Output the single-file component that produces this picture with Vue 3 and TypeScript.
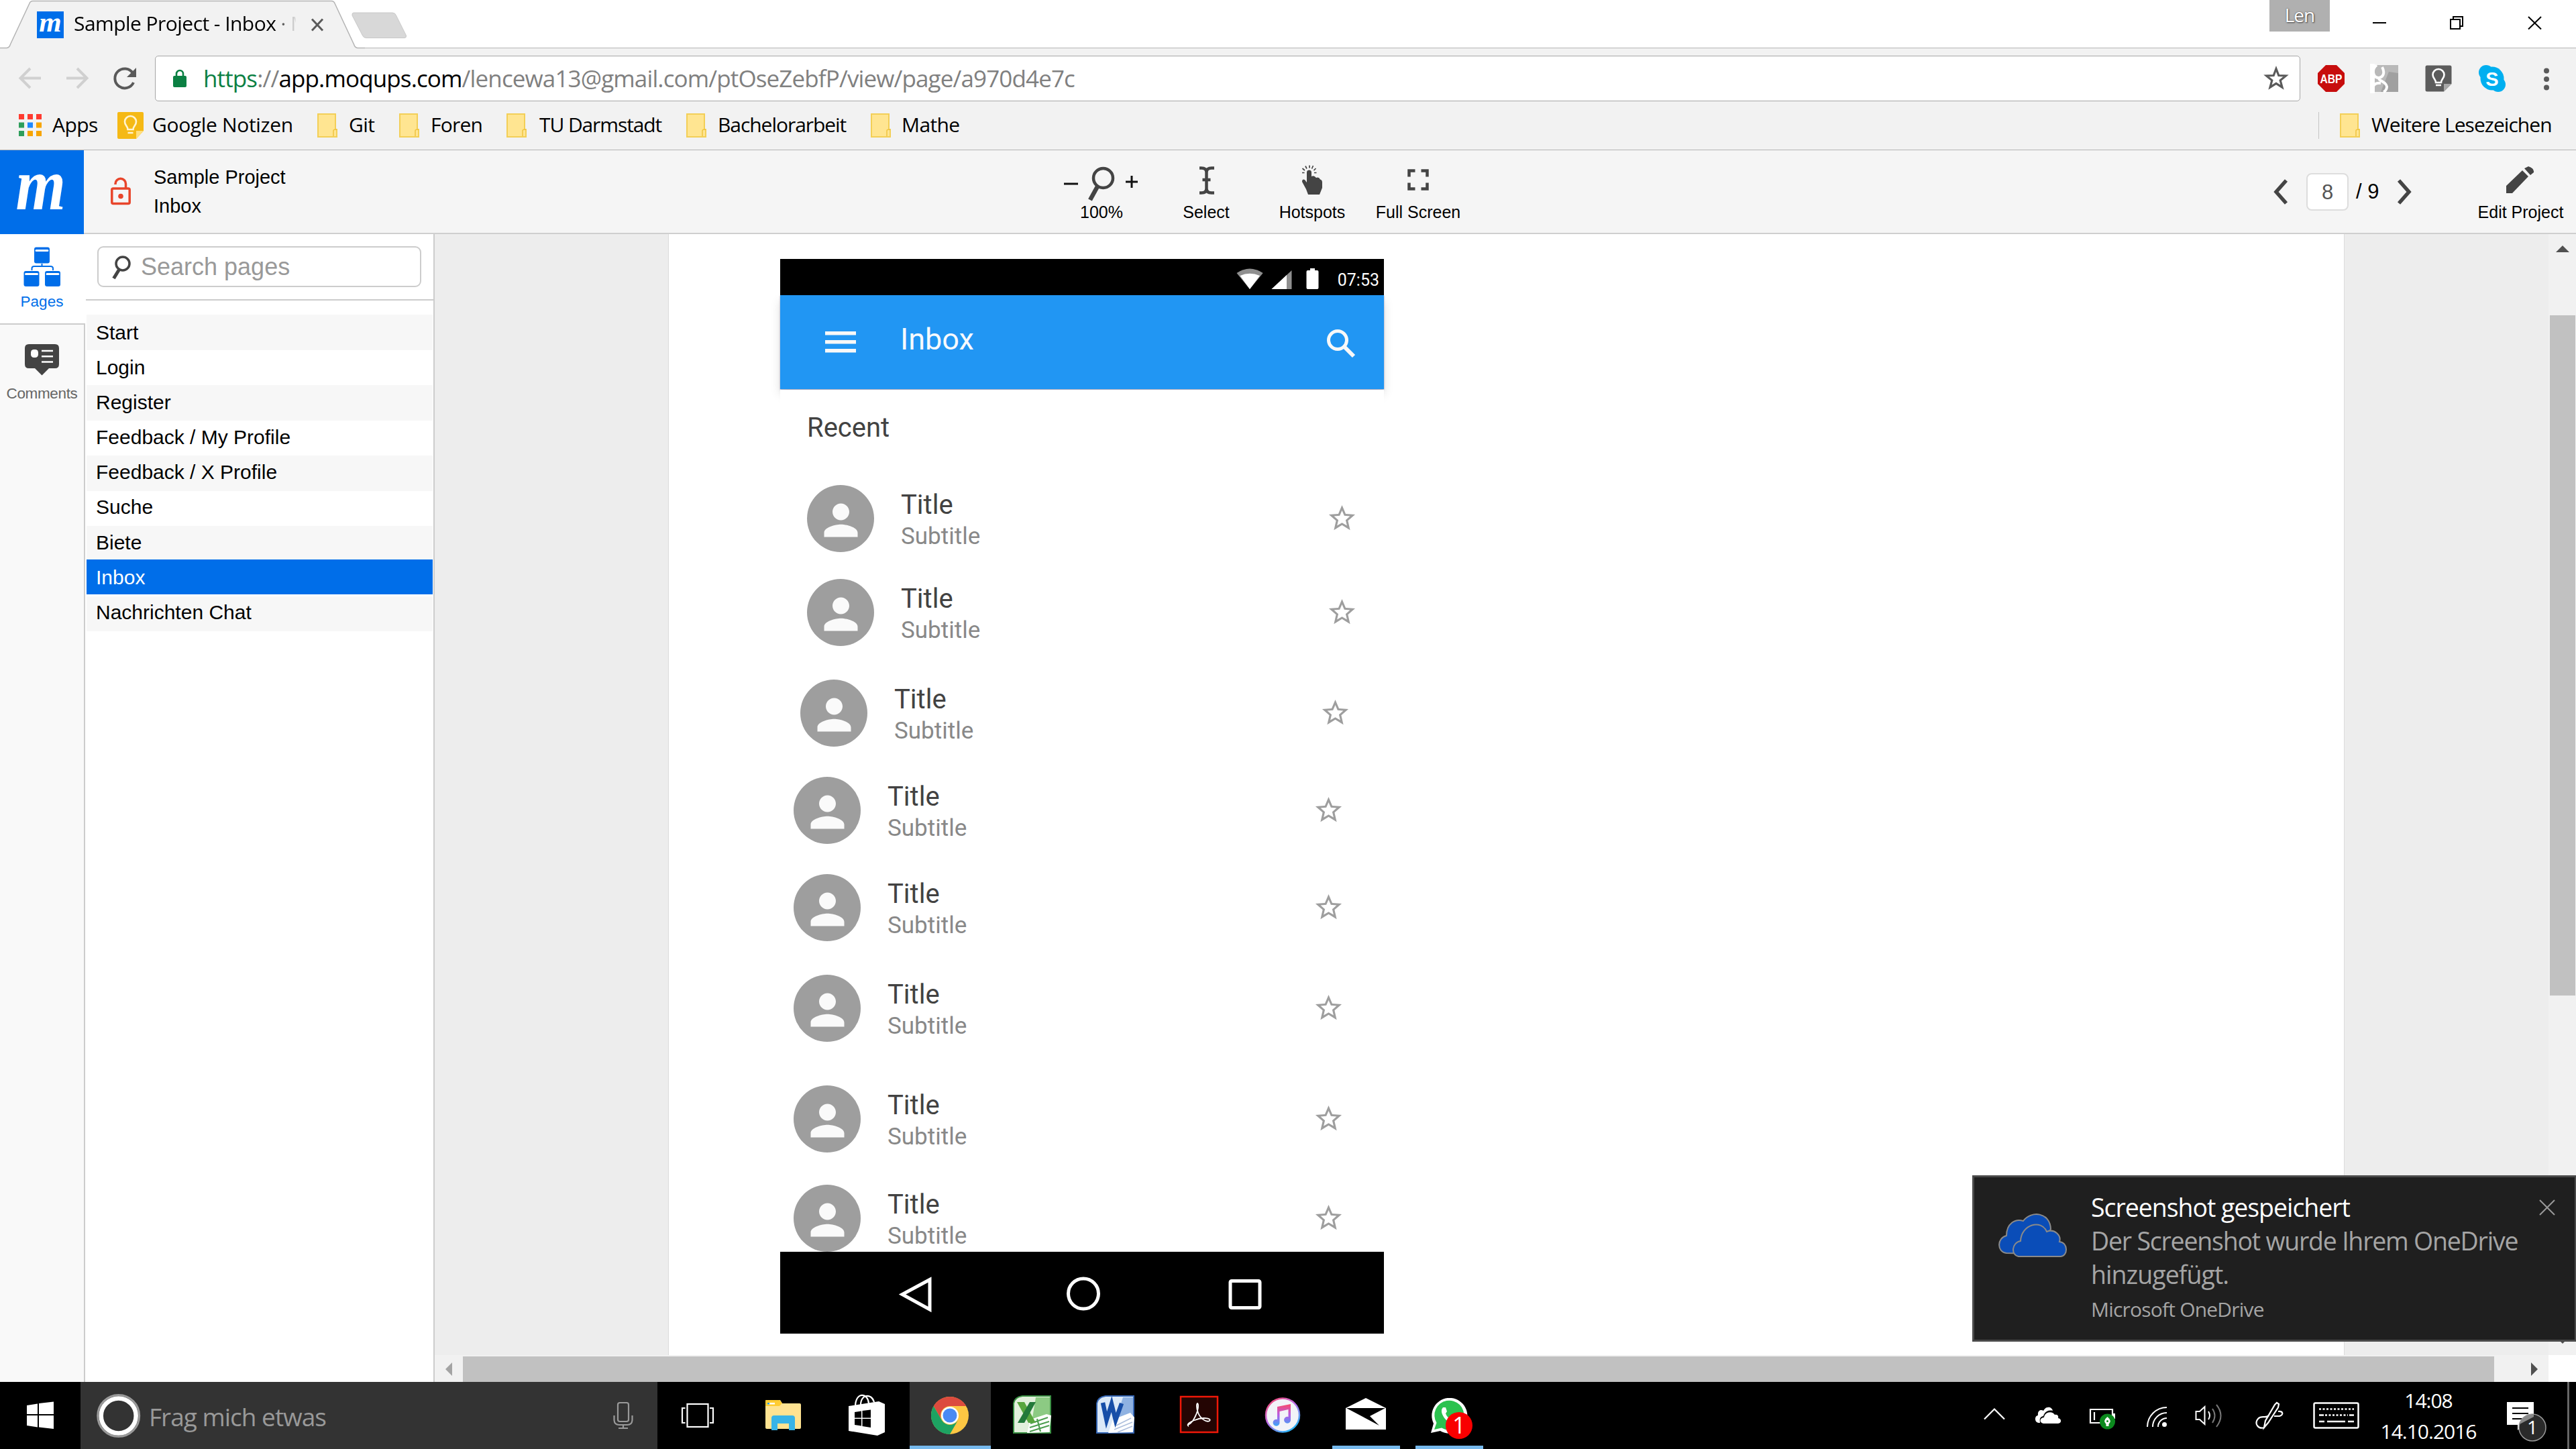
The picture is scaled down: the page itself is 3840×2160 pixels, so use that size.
<script setup lang="ts">
interface Bookmark { label: string; kind: 'apps' | 'keep' | 'folder'; cls: string }
interface Contact { gap: number; indent: number }

const bookmarks: Bookmark[] = [
  { label: 'Apps', kind: 'apps', cls: 'bm-apps' },
  { label: 'Google Notizen', kind: 'keep', cls: 'bm-keep' },
  { label: 'Git', kind: 'folder', cls: 'bm-git' },
  { label: 'Foren', kind: 'folder', cls: 'bm-foren' },
  { label: 'TU Darmstadt', kind: 'folder', cls: 'bm-tu' },
  { label: 'Bachelorarbeit', kind: 'folder', cls: 'bm-ba' },
  { label: 'Mathe', kind: 'folder', cls: 'bm-mathe' },
]

const appDots = ['#ff3b30', '#ff3b30', '#ff3b30', '#2e9e5b', '#1e88ff', '#f7a500', '#2e9e5b', '#f7a500', '#f7a500']

const pages: string[] = [
  'Start', 'Login', 'Register', 'Feedback / My Profile', 'Feedback / X Profile',
  'Suche', 'Biete', 'Inbox', 'Nachrichten Chat',
]
const activePage = 'Inbox'

const contacts: Contact[] = [
  { gap: 60.5, indent: 40 },
  { gap: 40, indent: 40 },
  { gap: 50, indent: 30 },
  { gap: 45, indent: 20 },
  { gap: 45, indent: 20 },
  { gap: 50, indent: 20 },
  { gap: 65, indent: 20 },
  { gap: 47.5, indent: 20 },
]
</script>

<template>
  <div class="screen">
    <!-- Tab strip -->
    <div class="tabstrip">
      <div class="tab">
        <svg class="tab-shape" width="544" height="72" viewBox="0 0 544 72">
          <path d="M0 72V71.5H10Q14 71 15.500 66L43.500 6Q45 1.500 49 1.500H494Q498 1.500 499.500 6L527.500 66Q529 71 533 71.500H544V72Z" fill="#f2f2f2" />
          <path d="M0 71.500H10Q14 71 15.500 66L43.500 6Q45 1.500 49 1.500H494Q498 1.500 499.500 6L527.500 66Q529 71 533 71.500H544" fill="none" stroke="#b4b4b4" stroke-width="1.500" />
        </svg>
        <span class="favicon"><span class="favicon-m">m</span></span>
        <span class="tab-title">Sample Project - Inbox · M</span>
        <svg class="tab-close" width="20" height="20" viewBox="0 0 20 20"><path d="M2 1.500L18 18.500M18 1.500L2 18.500" stroke="#5a5a5a" stroke-width="3" /></svg>
      </div>
      <svg class="newtab" width="84" height="40" viewBox="0 0 84 40"><path d="M3 1H61Q65 1 66.500 5L81.500 35Q82 38.500 79 38.500H22Q18 38.500 16.500 35L1 5Q0.500 1 3 1Z" fill="#d8d8d8" stroke="#c8c8c8" /></svg>
      <div class="spacer"></div>
      <div class="user">Len</div>
      <svg class="winctl" width="367" height="71" viewBox="0 0 367 71" fill="none" stroke="#000" stroke-width="2">
        <path d="M64 34H84" />
        <path d="M180 29H194V43H180ZM184 29V25H198V39H194" />
        <path d="M296 25L315 43.500M315 25L296 43.500" />
      </svg>
    </div>

    <!-- Toolbar -->
    <div class="toolbar">
      <svg width="231" height="90" viewBox="0 72 231 90" fill="none">
        <path d="M61 116.500H31M45 102L30.500 116.500L45 131" stroke="#d0d0d0" stroke-width="4" />
        <path d="M99 116.500H129M115 102L129.500 116.500L115 131" stroke="#d0d0d0" stroke-width="4" />
        <path d="M198 109A14.500 14.500 0 1 0 199 123" stroke="#5a5a5a" stroke-width="4" />
        <path d="M203 101V115H189Z" fill="#5a5a5a" />
      </svg>
      <div class="omnibox">
        <svg class="lock" width="20" height="28" viewBox="0 0 20 28">
          <path d="M5 11V7a5 5 0 0 1 10 0V11" fill="none" stroke="#0b8043" stroke-width="2.600" />
          <rect x="0" y="10" width="20" height="17" rx="2" fill="#0b8043" />
        </svg>
        <span class="url"><span class="url-scheme">https</span>://<span class="url-host">app.moqups.com</span>/lencewa13@gmail.com/ptOseZebfP/view/page/a970d4e7c</span>
        <svg class="bookmark-star" width="38" height="38" viewBox="0 0 38 38"><path d="M19 4.500L22.800 14.500L33.500 15L25.200 21.800L28 32.200L19 26.300L10 32.200L12.800 21.800L4.500 15L15.200 14.500Z" fill="none" stroke="#5a5a5a" stroke-width="3.200" /></svg>
      </div>
      <div class="extensions">
        <svg width="40" height="40" viewBox="0 0 40 40">
          <path d="M12 0H28L40 12V28L28 40H12L0 28V12Z" fill="#c70d0d" />
          <text x="3.500" y="27" font-size="18" font-weight="700" textLength="33" lengthAdjust="spacingAndGlyphs" fill="#fff" class="arial">ABP</text>
        </svg>
        <svg width="40" height="40" viewBox="0 0 40 40">
          <rect width="40" height="40" fill="#b9b9b9" /><path d="M40 12L26 10L14 40H40Z" fill="#a0a0a0" />
          <path d="M3 0V40H0V0ZM8 0C0 6 2 18 10 19C17 19 21 12 16 3M12 19C8 23 22 24 23 32C23 38 18 40 18 40M3 40C0 30 6 26 14 27" fill="none" stroke="#fff" stroke-width="4" />
        </svg>
        <svg width="40" height="40" viewBox="0 0 40 40">
          <path d="M3 0.500H37Q39.500 0.500 39.500 3V28L28 39.500H3Q0.500 39.500 0.500 37V3Q0.500 0.500 3 0.500Z" fill="#5c5c5c" /><path d="M39.500 28H28V39.500Z" fill="#a8a8a8" />
          <path d="M16 26C16 21 11.500 20 11.500 14.500A8.500 8.500 0 0 1 28.500 14.500C28.500 20 24 21 24 26ZM16 30H24" fill="none" stroke="#fff" stroke-width="2.600" />
        </svg>
        <svg width="40" height="40" viewBox="0 0 40 40">
          <circle cx="20" cy="20" r="17.500" fill="#00aff0" /><circle cx="11" cy="11" r="11" fill="#00aff0" /><circle cx="29" cy="29" r="11" fill="#00aff0" />
          <text x="20" y="30.500" font-size="29" font-weight="700" text-anchor="middle" fill="#fff" class="arial">S</text>
        </svg>
        <svg class="kebab" width="12" height="40" viewBox="0 0 12 40" fill="#5a5a5a"><circle cx="6" cy="8.500" r="4" /><circle cx="6" cy="21" r="4" /><circle cx="6" cy="33.500" r="4" /></svg>
      </div>
    </div>

    <!-- Bookmarks bar -->
    <div class="bookmarks">
      <div v-for="b in bookmarks" :key="b.label" class="bookmark" :class="b.cls">
        <svg v-if="b.kind === 'apps'" width="34" height="40" viewBox="0 0 34 40">
          <rect v-for="(c, i) in appDots" :key="i" :x="(i % 3) * 13" :y="3 + Math.floor(i / 3) * 12.500" width="8" height="8" :fill="c" />
        </svg>
        <svg v-else-if="b.kind === 'keep'" width="39" height="40" viewBox="0 0 39 40">
          <path d="M2 0H37Q39 0 39 2V28L28 40H2Q0 40 0 38V2Q0 0 2 0Z" fill="#f5b915" /><path d="M39 28H28V40Z" fill="#ffdf80" />
          <path d="M15.500 26C15.500 21 11 20 11 14.500A8.500 8.500 0 0 1 28 14.500C28 20 23.500 21 23.500 26ZM15.500 31H23.500" fill="none" stroke="#fff4d0" stroke-width="2.600" />
        </svg>
        <svg v-else width="30" height="36" viewBox="0 0 30 36">
          <path d="M1 1H27V24H29V35H1Z" fill="#ffe591" stroke="#f3cf57" stroke-width="2" /><path d="M24 34V26Q24 24 27 24H29" fill="none" stroke="#f0c440" stroke-width="1.500" />
        </svg>
        <span>{{ b.label }}</span>
      </div>
      <div class="spacer"></div>
      <div class="bookmark bm-more">
        <svg width="30" height="36" viewBox="0 0 30 36">
          <path d="M1 1H27V24H29V35H1Z" fill="#ffe591" stroke="#f3cf57" stroke-width="2" /><path d="M24 34V26Q24 24 27 24H29" fill="none" stroke="#f0c440" stroke-width="1.500" />
        </svg>
        <span>Weitere Lesezeichen</span>
      </div>
    </div>

    <!-- Moqups header -->
    <header class="app-header">
      <div class="logo"><span class="logo-m">m</span></div>
      <svg class="unlock" width="30" height="40" viewBox="0 0 30 40" fill="none" stroke="#e8452b" stroke-width="3.500">
        <rect x="1.800" y="15" width="26.400" height="22.500" rx="2" /><path d="M7 9V8a7.500 7.500 0 0 1 15.500 0V15" /><circle cx="15" cy="26.500" r="3.800" fill="#e8452b" stroke="none" />
      </svg>
      <div class="project"><div>Sample Project</div><div>Inbox</div></div>
      <div class="tools">
        <div class="tool tool-zoom">
          <svg width="160" height="77" viewBox="1562 224 160 77">
            <path d="M1586 274H1607M1678 271H1696M1687 262V280" stroke="#111" stroke-width="3" />
            <circle cx="1644.500" cy="265.500" r="14.500" fill="none" stroke="#444" stroke-width="4.500" />
            <path d="M1636 278L1625 298" stroke="#444" stroke-width="6.500" />
          </svg>
          <span>100%</span>
        </div>
        <div class="tool tool-select">
          <svg width="152" height="77" viewBox="1722 224 152 77" fill="none" stroke="#444" stroke-width="4.500">
            <path d="M1788 250.500H1791Q1798.500 250.500 1798.500 257V281Q1798.500 287.500 1791 287.500H1788M1810 250.500H1806Q1798.500 250.500 1798.500 257M1810 287.500H1806Q1798.500 287.500 1798.500 281M1792.500 268H1804.500" />
          </svg>
          <span>Select</span>
        </div>
        <div class="tool tool-hot">
          <svg width="164" height="77" viewBox="1874 224 164 77">
            <path d="M1948 257a3.500 3.500 0 0 1 7 0V263Q1959 261 1962 265Q1966 263 1968 267.500Q1971 268 1971 272V280L1967 290H1950L1947 282L1941 271Q1941 266 1945 268L1948 272Z" fill="#444" />
            <path d="M1941 257.500H1944.500M1941.500 251L1945 254M1946 247.500L1948 251.500M1952 246.500V250.500M1957.500 247L1955.500 251.500M1961.500 251L1958.500 254M1962.500 257.500H1959" stroke="#444" stroke-width="1.700" />
          </svg>
          <span>Hotspots</span>
        </div>
        <div class="tool tool-full">
          <svg width="152" height="77" viewBox="2038 224 152 77" fill="none" stroke="#444" stroke-width="4.500">
            <path d="M2100.500 263.500V254.500H2109.500M2118.500 254.500H2127.500V263.500M2127.500 272.500V281.500H2118.500M2109.500 281.500H2100.500V272.500" />
          </svg>
          <span>Full Screen</span>
        </div>
      </div>
      <div class="spacer"></div>
      <div class="pager">
        <svg width="24" height="38" viewBox="0 0 24 38"><path d="M20 2L5 19L20 36" fill="none" stroke="#444" stroke-width="5.500" /></svg>
        <div class="page-no">8</div>
        <span class="page-total">/ 9</span>
        <svg width="24" height="38" viewBox="0 0 24 38"><path d="M4 2L19 19L4 36" fill="none" stroke="#444" stroke-width="5.500" /></svg>
      </div>
      <div class="tool tool-edit">
        <svg width="165" height="77" viewBox="3675 224 165 77" fill="#444">
          <path d="M3736 288V277L3760 254L3769 263L3745 288ZM3763 251L3769 248Q3778 251 3777 257L3772 261Z" />
        </svg>
        <span>Edit Project</span>
      </div>
    </header>

    <div class="workspace">
      <!-- Rail -->
      <nav class="rail">
        <div class="rail-pages">
          <svg width="125" height="87" viewBox="0 0 125 87">
            <g fill="#006ee9"><rect x="51" y="19.500" width="23" height="24" rx="3" /><rect x="35.500" y="55" width="23" height="23" rx="3" /><rect x="67" y="55" width="23" height="23" rx="3" /></g>
            <path d="M54 24.500H71M38.500 59.500H55.500M70 59.500H87" stroke="#fff" stroke-width="3" stroke-linecap="round" />
            <path d="M62.500 44V48M47.500 54V51Q47.500 48 51 48H75Q79 48 79 51V54" fill="none" stroke="#006ee9" stroke-width="2" />
          </svg>
          <span>Pages</span>
        </div>
        <div class="rail-rest">
          <svg width="125" height="89" viewBox="0 0 125 89">
            <path d="M43 29H82Q88 29 88 35V59Q88 65 82 65H73L62.500 75.500L52 65H43Q37 65 37 59V35Q37 29 43 29Z" fill="#444" />
            <rect x="46" y="37" width="11" height="12" rx="4.500" fill="#fff" /><path d="M62 39H79M62 47.300H79M62 55.500H79" stroke="#fff" stroke-width="2.500" />
          </svg>
          <span>Comments</span>
        </div>
      </nav>

      <!-- Pages panel -->
      <aside class="panel">
        <div class="search">
          <svg width="28" height="38" viewBox="0 0 28 38"><circle cx="16" cy="13" r="10" fill="none" stroke="#444" stroke-width="3.500" /><path d="M10.500 22L2.500 35" stroke="#444" stroke-width="5" /></svg>
          <span>Search pages</span>
        </div>
        <div class="divider"></div>
        <ul class="pages">
          <li v-for="p in pages" :key="p" :class="{ active: p === activePage }">{{ p }}</li>
        </ul>
      </aside>

      <!-- Canvas -->
      <main class="canvas">
        <div class="canvas-row">
          <div class="viewport">
            <div class="paper">
              <div class="phone">
                <div class="statusbar">
                  <svg width="140" height="54" viewBox="1840 386 140 54">
                    <path d="M1843.500 407Q1863 394 1882.700 407L1863 431Z" fill="#8f8f8f" /><path d="M1848.500 411Q1863 404.500 1878 411L1863 431Z" fill="#fff" />
                    <path d="M1925.500 403V431H1895.500Z" fill="#8f8f8f" /><path d="M1918 410V431H1895.500Z" fill="#fff" />
                    <path d="M1953 400H1960V403H1963.500Q1965.500 403 1965.500 405V429Q1965.500 431 1963.500 431H1949.500Q1947.500 431 1947.500 429V405Q1947.500 403 1949.500 403H1953Z" fill="#fff" />
                  </svg>
                  <span>07:53</span>
                </div>
                <div class="appbar">
                  <svg class="burger" width="46" height="32" viewBox="0 0 46 32" fill="#f8f8f8"><rect y="0" width="46" height="5.500" /><rect y="13" width="46" height="5.500" /><rect y="26" width="46" height="5.500" /></svg>
                  <span class="appbar-title">Inbox</span>
                  <div class="spacer"></div>
                  <svg class="find" width="44" height="44" viewBox="0 0 44 44" fill="none" stroke="#f8f8f8"><circle cx="17" cy="17" r="13.500" stroke-width="5" /><path d="M27 27L41 41" stroke-width="6" /></svg>
                </div>
                <div class="inbox">
                  <div class="recent">Recent</div>
                  <div v-for="(c, i) in contacts" :key="i" class="contact" :style="{ marginTop: c.gap + 'px', marginLeft: c.indent + 'px' }">
                    <div class="avatar">
                      <svg width="75" height="75" viewBox="0 0 24 24" fill="#fafafa"><path d="M12 12c2.210 0 4-1.790 4-4s-1.790-4-4-4-4 1.790-4 4 1.790 4 4 4zm0 2c-2.670 0-8 1.340-8 4v2h16v-2c0-2.660-5.330-4-8-4z" /></svg>
                    </div>
                    <div class="lines"><div class="title">Title</div><div class="subtitle">Subtitle</div></div>
                    <svg class="star" width="47" height="47" viewBox="0 0 24 24" fill="#9e9e9e"><path d="M22 9.240l-7.190-.620L12 2 9.190 8.630 2 9.240l5.460 4.730L5.820 21 12 17.270 18.180 21l-1.630-7.030L22 9.240zM12 15.400l-3.760 2.270 1-4.280-3.320-2.880 4.380-.380L12 6.100l1.710 4.040 4.380.380-3.320 2.880 1 4.280L12 15.400z" /></svg>
                  </div>
                </div>
                <div class="navbar">
                  <svg width="900" height="122" viewBox="1163 1867 900 122" fill="none" stroke="#fff" stroke-width="5">
                    <path d="M1386 1908.500V1953L1345 1930.500Z" /><circle cx="1615" cy="1929.500" r="22.500" /><rect x="1834" y="1910.500" width="44" height="40" rx="2" />
                  </svg>
                </div>
              </div>
            </div>
          </div>
          <div class="vbar">
            <svg width="41" height="28" viewBox="0 0 41 28"><path d="M11 27L21 17L31 27Z" fill="#505050" /></svg>
            <div class="vthumb"></div>
            <div class="spacer"></div>
            <svg width="41" height="28" viewBox="0 0 41 28"><path d="M11 1L21 11L31 1Z" fill="#505050" /></svg>
          </div>
        </div>
        <div class="hbar">
          <svg width="42" height="40" viewBox="648 2020 42 40"><path d="M674 2031V2051L664 2041Z" fill="#a3a3a3" /></svg>
          <div class="hthumb"></div>
          <svg width="81" height="40" viewBox="3718 2020 81 40"><path d="M3773 2031V2051L3783 2041Z" fill="#505050" /></svg>
          <div class="corner"></div>
        </div>
      </main>
    </div>

    <!-- Taskbar -->
    <footer class="taskbar">
      <svg width="120" height="100" viewBox="0 0 120 100" fill="#fff"><path d="M40 35L56 32.500V48H40ZM58 32L80 29.500V48H58ZM40 50H56V67.500L40 65ZM58 50H80V70L58 67.500Z" /></svg>
      <div class="cortana">
        <svg width="102" height="100" viewBox="120 2060 102 100" fill="none"><circle cx="176.700" cy="2110.500" r="31" stroke="#999" stroke-width="3" /><circle cx="176.700" cy="2110.500" r="26" stroke="#fff" stroke-width="6.500" /></svg>
        <span>Frag mich etwas</span>
        <div class="spacer"></div>
        <svg width="80" height="100" viewBox="900 2060 80 100" fill="none" stroke="#999" stroke-width="2.200"><rect x="921" y="2091" width="16" height="28" rx="3" /><path d="M915.500 2110V2117Q916 2124 923 2124H935Q942 2124 942.500 2117V2110M929 2124V2129M922 2129H936" /></svg>
      </div>
      <svg width="126" height="100" viewBox="980 2060 126 100" fill="none" stroke="#fff" stroke-width="2.200"><rect x="1024.500" y="2093" width="31" height="34" /><path d="M1021.500 2099H1017V2121H1021.500M1058 2099H1063V2121H1058" /></svg>

      <!-- Explorer -->
      <svg class="task" viewBox="0 0 124 100"><path d="M35 28Q35 27 37 27H57L60 32H86Q88 32 88 34V68Q88 70 86 70H37Q35 70 35 68Z" fill="#ffe391" /><path d="M35 28Q35 27 37 27H56L60 31.500L56 36H35Z" fill="#ffcc33" /><path d="M38 31H49V33.500H38Z" fill="#fff" /><path d="M38 31H41V33.500H38Z" fill="#2da3e0" /><path d="M44 72V54Q44 50 48 50H75Q79 50 79 54V72H70V62H53V72Z" fill="#38b4e7" /></svg>
      <!-- Store -->
      <svg class="task" viewBox="0 0 124 100"><path d="M35 36L80 29L89 33V75L78 80L35 73Z" fill="#fff" /><path d="M45 37C45 14 64 16 65 32M53 36C52 18 69 16 73 30" fill="none" stroke="#fff" stroke-width="2.200" /><path d="M44 45L54 43.500V53.500H44ZM55.500 43L68 41.500V53.500H55.500ZM44 55H54V65.500L44 64ZM55.500 55H68V68L55.500 66Z" fill="#000" /></svg>
      <!-- Chrome -->
      <div class="task-wrap running wide">
        <svg class="task" viewBox="0 0 124 100"><circle cx="62" cy="50" r="28" fill="#fdc743" /><path d="M37.700 36A28 28 0 0 1 86.300 36H62A14 14 0 0 0 49.900 57Z" fill="#dc4b3e" /><path d="M37.700 36A28 28 0 0 0 62 78L74.100 57A14 14 0 0 1 49.900 57Z" fill="#1da362" /><circle cx="62" cy="50" r="13" fill="#fff" /><circle cx="62" cy="50" r="10.500" fill="#4a8af4" /></svg>
      </div>
      <!-- Excel -->
      <svg class="task" viewBox="0 0 124 100"><path d="M46 21H88V76H33V32Q34 23 46 21Z" fill="#e2f0dc" stroke="#3b9144" stroke-width="2" /><path d="M66 23H87V50L60 60Z" fill="#8cca83" /><path d="M53 76L58 56L82 48L89 50L86 75Z" fill="#fff" /><path d="M58 62L84 53M57 68L86 59M57 74L86 65M68 55L73 74" stroke="#4d9e50" stroke-width="2.200" /><path d="M38 30H49L66 61H55Z" fill="#58a63e" /><path d="M57 30H66L49 61H39Z" fill="#23793a" /></svg>
      <!-- Word -->
      <svg class="task" viewBox="0 0 124 100"><path d="M46 21H88V76H33V32Q34 23 46 21Z" fill="#dce9f8" stroke="#3566b4" stroke-width="2" /><path d="M72 23H87V50L60 60Z" fill="#8fb2e2" /><path d="M50 76L57 56L83 46L89 53L87 75Z" fill="#fff" /><path d="M62 65L84 54M59 71L86 60M64 75L86 66" stroke="#aebfdd" stroke-width="1.800" /><path d="M42 31L47.500 57L55 33L61 57L70 32" fill="none" stroke="#174ea8" stroke-width="6.500" /></svg>
      <!-- Acrobat -->
      <svg class="task" viewBox="0 0 124 100"><rect x="34" y="22" width="55" height="53" fill="#240503" stroke="#f01808" stroke-width="2.500" /><path d="M45 64C53 61 61 43 60 34C59 28 56 35 60 46C63 54 72 61 77 58C81 54 66 52 55 57C49 59 43 63 45 65Z" fill="none" stroke="#fff" stroke-width="1.800" /></svg>
      <!-- iTunes -->
      <svg class="task" viewBox="0 0 124 100">
        <defs><linearGradient id="ring" x1="0" y1="0" x2="0.700" y2="1"><stop offset="0" stop-color="#fa4661" /><stop offset=".5" stop-color="#c06be8" /><stop offset="1" stop-color="#29b6f6" /></linearGradient><linearGradient id="note" x1="0" y1="0" x2="0" y2="1"><stop offset="0" stop-color="#fb4b6b" /><stop offset=".5" stop-color="#b55be6" /><stop offset="1" stop-color="#3aa6f8" /></linearGradient></defs>
        <circle cx="62" cy="49.500" r="25" fill="#f2f3f8" stroke="url(#ring)" stroke-width="2.500" /><path d="M54 37L74 33V56A5 5 0 1 1 70.500 52V41L57.500 44V60A5 5 0 1 1 54 56Z" fill="url(#note)" />
      </svg>
      <!-- Mail -->
      <div class="task-wrap running"><svg class="task" viewBox="0 0 124 100"><path d="M32 39L62 24L92 39V71H32Z" fill="#fff" /><path d="M33 39H91L68 51L82 65Z" fill="#000" /></svg></div>
      <!-- WhatsApp -->
      <div class="task-wrap running"><svg class="task" viewBox="0 0 124 100"><path d="M35 76L39 62A26.500 26.500 0 1 1 49 73Z" fill="#fff" /><path d="M40 71L43.500 61A22 22 0 1 1 51 68.500Z" fill="#2bc24f" /><path d="M53 38C49 42 51 49 57 56C64 63 71 64 74 59L69 54L65 56Q59 53 57 47L59 44L57 38Z" fill="#fff" /><circle cx="77" cy="65" r="20" fill="#f90000" /><text x="77" y="77" font-size="34" text-anchor="middle" fill="#fff" class="segoe">1</text></svg></div>
      <div class="spacer"></div>

      <div class="tray">
        <svg width="80" height="100" viewBox="2933 2060 80 100"><path d="M2958 2115.500L2973 2100.500L2988 2115.500" fill="none" stroke="#fff" stroke-width="2.200" /></svg>
        <svg width="81" height="100" viewBox="3013 2060 81 100"><path d="M3039 2121C3032 2120 3033 2110 3038 2110C3037 2102 3043 2101 3046 2103C3050 2095 3059 2097 3060 2103C3052 2101 3047 2106 3046 2111C3039 2112 3041 2119 3041 2121Z" fill="#fff" /><path d="M3046 2122C3039 2121 3041 2113 3047 2113C3048 2104 3060 2103 3063 2109C3067 2108 3069 2111 3068 2114C3074 2115 3073 2122 3068 2122Z" fill="#fff" /></svg>
        <svg width="81" height="100" viewBox="3094 2060 81 100"><path d="M3116 2101H3149V2121H3116ZM3122 2105V2117" fill="none" stroke="#fff" stroke-width="2.200" /><rect x="3150" y="2107" width="3" height="8" fill="#fff" /><circle cx="3141.500" cy="2119" r="11.500" fill="#0c8a1e" /><path d="M3141.500 2112Q3149 2118 3143.500 2123V2126H3139.500V2123Q3134 2118 3141.500 2112Z" fill="#fff" /><circle cx="3141.500" cy="2118.500" r="1.500" fill="#0c8a1e" /></svg>
        <svg width="79" height="100" viewBox="3175 2060 79 100" fill="none" stroke="#fff" stroke-width="2"><path d="M3201 2127A29 29 0 0 1 3230 2098M3209 2127A21 21 0 0 1 3230 2106M3217 2127A13 13 0 0 1 3230 2114" /><circle cx="3226.500" cy="2123.500" r="3.500" fill="#fff" stroke="none" /></svg>
        <svg width="81" height="100" viewBox="3254 2060 81 100" fill="none" stroke="#fff" stroke-width="2"><path d="M3273.500 2104H3279L3286.500 2097V2123L3279 2116H3273.500ZM3292 2104Q3296 2110 3292 2116" /><path d="M3298 2100Q3305 2110 3298 2121M3304 2094Q3317 2110 3304 2127" stroke="#777" /></svg>
        <svg width="96" height="100" viewBox="3335 2060 96 100" fill="none" stroke="#fff" stroke-width="2.200"><path d="M3375 2128L3377 2118L3391 2094L3394 2091L3397 2093L3396 2098L3381 2121Z" /><path d="M3376 2128C3366 2131 3360 2122 3366 2115C3371 2109 3378 2115 3382 2110M3396 2104C3403 2103 3405 2109 3398 2111H3390" /></svg>
        <svg width="102" height="100" viewBox="3431 2060 102 100" fill="none" stroke="#fff" stroke-width="2.500"><rect x="3449.500" y="2091.500" width="66" height="37" rx="2" /><path d="M3457 2100.500H3509M3466 2109.500H3500" stroke-dasharray="3 2.500" /><path d="M3457 2109.500H3464M3502 2109.500H3509M3457 2119H3465M3469 2119H3496M3500 2119H3509" /></svg>
      </div>
      <div class="clock"><div>14:08</div><div class="date">14.10.2016</div></div>
      <svg width="118" height="100" viewBox="3709 2060 118 100"><path d="M3737 2090H3777V2124H3762L3753 2132V2124H3737Z" fill="#fff" /><path d="M3745 2099H3769M3745 2107H3769M3745 2115H3760" stroke="#000" stroke-width="2" /><circle cx="3775" cy="2128" r="20" fill="#2a2a2a" stroke="#999" stroke-width="1.500" /><path d="M3756 2123Q3759 2112 3770 2109L3777 2109V2112Z" fill="#888" /><text x="3775" y="2138" font-size="28" text-anchor="middle" fill="#fff" class="segoe">1</text></svg>
      <div class="peek"></div>
    </footer>

    <!-- Notification -->
    <div class="toast">
      <svg class="cloud" width="102" height="66" viewBox="0 0 102 66" fill="#0a4db8" stroke="#8a8a8a" stroke-width="2">
        <path d="M12 59C-3 57-2 36 12 33C12 15 25 7 37 11C49-5 77-2 78 23L60 60Z" /><path d="M30 64C18 62 20 43 33 41C34 16 64 8 72 27C84 22 94 33 91 42C104 43 104 63 93 64Z" />
      </svg>
      <div class="toast-text">
        <div class="toast-title">Screenshot gespeichert</div>
        <div class="toast-l1">Der Screenshot wurde Ihrem OneDrive</div>
        <div class="toast-l2">hinzugefügt.</div>
        <div class="toast-src">Microsoft OneDrive</div>
      </div>
      <svg class="toast-close" width="24" height="24" viewBox="0 0 24 24"><path d="M1 1L23 23M23 1L1 23" stroke="#9a9a9a" stroke-width="2" /></svg>
    </div>
  </div>
</template>

<style>
html, body { margin: 0; overflow: hidden; background: #fff; }
</style>

<style scoped>
.screen { position: relative; width: 3840px; height: 2160px; overflow: hidden; display: flex; flex-direction: column; background: #fff; color: #000; font-family: "Open Sans", "Noto Sans", sans-serif; }
.screen * { box-sizing: border-box; }
svg { display: block; flex: none; overflow: visible; }
.spacer { flex: 1; }
.arial { font-family: "Liberation Sans", Arial, sans-serif; }
.segoe { font-family: "Open Sans", sans-serif; }

.tabstrip { height: 72px; flex: none; display: flex; align-items: flex-start; border-bottom: 1px solid #b4b4b4; }
.tab { position: relative; width: 524px; height: 72px; display: flex; padding-left: 55px; flex: none; margin-bottom: -1px; }
.tab-shape { position: absolute; left: 0; top: 0; }
.favicon { position: relative; width: 40px; height: 40px; margin-top: 17px; background: #006ee9; display: flex; justify-content: center; flex: none; }
.favicon-m { font: italic 700 43px/48px "Liberation Serif", serif; color: #fff; margin-top: -8px; }
.tab-title { position: relative; width: 331px; margin: 15px 0 0 15px; font-size: 30px; line-height: 40px; letter-spacing: -.55px; white-space: nowrap; overflow: hidden; background: linear-gradient(90deg, #000 300px, rgba(0, 0, 0, .05) 331px); background-clip: text; color: transparent; }
.tab-close { position: relative; margin: 27px 0 0 22px; }
.newtab { position: relative; margin-top: 18px; }
.user { width: 90px; height: 47px; background: #b0b0b0; color: #fff; font-size: 28px; line-height: 44px; letter-spacing: -1px; text-align: center; text-shadow: 0 0 2px #555, 1px 1px 2px #444; }

.toolbar { height: 90px; flex: none; display: flex; background: #f2f2f2; }
.omnibox { width: 3198px; height: 68px; margin-top: 11px; border: 1px solid #a6a6a6; border-radius: 5px; background: #fff; display: flex; align-items: center; padding: 0 16px 0 26px; flex: none; }
.lock { margin-bottom: 1px; }
.url { flex: 1; margin-left: 25px; font-size: 35px; line-height: 48px; letter-spacing: -.87px; color: #808080; white-space: nowrap; }
.url-scheme { color: #0b8043; }
.url-host { color: #000; }
.extensions { display: flex; gap: 40px; padding: 25px 0 0 26px; }
.kebab { margin-left: 15px; }

.bookmarks { height: 62px; flex: none; display: flex; align-items: flex-start; background: #f2f2f2; border-bottom: 1px solid #b4b4b4; padding: 5px 38px 0 28px; }
.bookmark { display: flex; align-items: center; height: 40px; font-size: 30px; line-height: 40px; letter-spacing: -.55px; white-space: nowrap; flex: none; }
.bookmark span { margin-top: -2px; }
.bm-apps { width: 147px; gap: 16px; }
.bm-keep { width: 298px; gap: 13px; letter-spacing: -.35px; }
.bm-git { width: 122px; gap: 17px; }
.bm-foren { width: 160px; gap: 17px; letter-spacing: -.8px; }
.bm-tu { width: 268px; gap: 19px; letter-spacing: -1.1px; }
.bm-ba { width: 275px; gap: 17px; letter-spacing: -1.05px; }
.bm-mathe { gap: 16px; letter-spacing: -.6px; }
.bm-more { width: 346px; gap: 17px; padding-left: 31px; border-left: 1px solid #c5c5c5; letter-spacing: -.95px; }

.app-header { height: 125px; flex: none; display: flex; align-items: flex-start; background: #f5f5f5; border-bottom: 2px solid #cfcfcf; font-family: "Liberation Sans", Arial, sans-serif; }
.logo { width: 125px; height: 125px; flex: none; background: #006ee9; display: flex; justify-content: center; position: relative; }
.logo-m { font: italic 700 110px/110px "Liberation Serif", serif; color: #fff; transform: scaleX(.87); margin: -4px 3px 0 0; }
.unlock { margin: 42px 0 0 40px; }
.project { width: 240px; margin: 19px 0 0 34px; font-size: 29px; line-height: 43px; }
.tools { display: flex; margin-left: 1093px; }
.tool { display: flex; flex-direction: column; align-items: center; font-size: 25px; line-height: 30px; white-space: nowrap; }
.tool-zoom { width: 160px; }
.tool-select { width: 152px; }
.tool-hot { width: 164px; }
.tool-full { width: 152px; }
.pager { display: flex; align-items: center; height: 56px; margin-top: 34px; width: 287px; }
.page-no { width: 63px; height: 56px; margin-left: 26px; border: 2px solid #ddd; border-radius: 8px; background: #fff; color: #555; font-size: 31px; line-height: 53px; text-align: center; }
.page-total { font-size: 31px; margin: 0 26px 0 11px; white-space: nowrap; }
.tool-edit { width: 165px; }

.workspace { flex: 1; min-height: 0; display: flex; font-family: "Liberation Sans", Arial, sans-serif; }
.rail { width: 127px; flex: none; display: flex; flex-direction: column; font-size: 22.5px; line-height: 28px; }
.rail-pages { height: 135px; background: #fff; border-bottom: 2px solid #ccc; color: #006ee9; }
.rail-rest { flex: 1; background: #f9f9f9; border-right: 2px solid #ccc; color: #666; }
.rail-rest span { letter-spacing: -.35px; }
.rail span { display: block; width: 125px; text-align: center; }
.panel { width: 521px; flex: none; border-right: 2px solid #ccc; padding-top: 18px; }
.search { width: 483px; height: 61px; margin-left: 18px; border: 2px solid #ccc; border-radius: 9px; display: flex; align-items: center; padding-left: 20px; color: #999; font-size: 36px; line-height: 54px; }
.search span { margin-left: 15px; }
.search svg { margin-top: 3px; }
.divider { height: 2px; margin: 18px 0 21px 1px; background: #ccc; }
.pages { list-style: none; margin: 0 1px 0 2px; padding: 0; height: 471.5px; background: repeating-linear-gradient(#f7f7f7 0 53px, #fff 53px 105px); }
.pages li { height: 52.1px; padding-left: 14px; font-size: 30px; line-height: 53px; }
.pages li.active { background: #006ee9; color: #fff; }

.canvas { flex: 1; display: flex; flex-direction: column; background: #ededed; }
.canvas-row { flex: 1; min-height: 0; display: flex; }
.viewport { flex: 1; padding-left: 348px; overflow: hidden; }
.paper { width: 2499px; height: 100%; background: #fff; border: solid #dcdcdc; border-width: 0 1px; padding: 36.5px 0 0 166px; }
.phone { width: 900px; font-family: Roboto, sans-serif; }
.statusbar { height: 54px; background: #000; color: #fff; display: flex; justify-content: flex-end; padding-right: 7px; font-size: 25px; line-height: 64px; }
.statusbar svg { margin-right: 14px; }
.appbar { position: relative; height: 140px; background: #2196f3; display: flex; padding: 0 42px 0 67px; box-shadow: 0 8px 14px rgba(0, 0, 0, .13), 0 1px 2px rgba(60, 60, 120, .5); }
.burger { margin-top: 54px; }
.appbar-title { margin: 36px 0 0 66px; font-size: 45px; line-height: 60px; color: #f6f9fd; }
.find { margin-top: 50px; }
.inbox { position: relative; height: 1286px; margin-top: 1px; margin-bottom: -1px; background: #fff; padding-top: 32px; color: #424242; }
.recent { margin-left: 40px; font-size: 40px; line-height: 50px; }
.contact { display: flex; width: 821px; height: 100px; }
.avatar { width: 100px; height: 100px; border-radius: 50%; background: #9e9e9e; padding: 15px 0 0 12.5px; }
.lines { flex: 1; padding: 6px 0 0 40px; }
.title { font-size: 40px; line-height: 48px; }
.subtitle { font-size: 35px; line-height: 40px; margin-top: 3px; color: #888; }
.star { margin-top: 26px; }
.navbar { position: relative; height: 122px; background: #000; }
.vbar { width: 41px; background: #f1f1f1; display: flex; flex-direction: column; }
.vthumb { width: 38px; height: 1014px; margin: 93px 0 0 2px; background: #c1c1c1; flex: none; }
.hbar { height: 40px; flex: none; display: flex; background: #f1f1f1; }
.hthumb { width: 3028px; margin-top: 2px; background: #c1c1c1; }
.corner { width: 41px; background: #fff; }

.taskbar { height: 100px; flex: none; display: flex; background: #000; color: #fff; }
.cortana { width: 860px; background: #333; display: flex; flex: none; color: #999; font-size: 37px; line-height: 100px; letter-spacing: -1px; }
.cortana span { margin-top: 2px; height: 98px; white-space: nowrap; }
.task { width: 124px; height: 100px; }
.task-wrap { position: relative; width: 124px; height: 100px; flex: none; }
.task-wrap svg { position: relative; }
.running::after { content: ""; position: absolute; left: 12px; bottom: 0; width: 101px; height: 5px; background: #76b9ed; }
.wide::before { content: ""; position: absolute; left: 2px; top: 0; width: 121px; height: 100px; background: #333; }
.wide::after { left: 2px; width: 121px; }
.tray { display: flex; }
.clock { width: 176px; padding: 5px 2px 0 0; text-align: center; font-size: 30px; line-height: 46px; letter-spacing: -1px; }
.peek { width: 3px; margin-right: 10px; background: #666; }

.toast { position: absolute; left: 2940px; top: 1752px; width: 900px; height: 248px; background: #1f1f1f; border: 3px solid #4a4a4a; border-right-width: 2px; display: flex; color: #a5a5a5; font-size: 37.5px; line-height: 50px; white-space: nowrap; letter-spacing: -.8px; }
.cloud { margin: 54px 0 0 36px; }
.toast-text { width: 669px; margin: 20px 0 0 36px; }
.toast-title { color: #fff; letter-spacing: -1.05px; }
.toast-l1 { letter-spacing: -1.23px; }
.toast-l2 { letter-spacing: -.95px; }
.toast-src { font-size: 30px; margin-top: 2px; }
.toast-close { margin-top: 33px; margin-left: -1px; }
</style>
